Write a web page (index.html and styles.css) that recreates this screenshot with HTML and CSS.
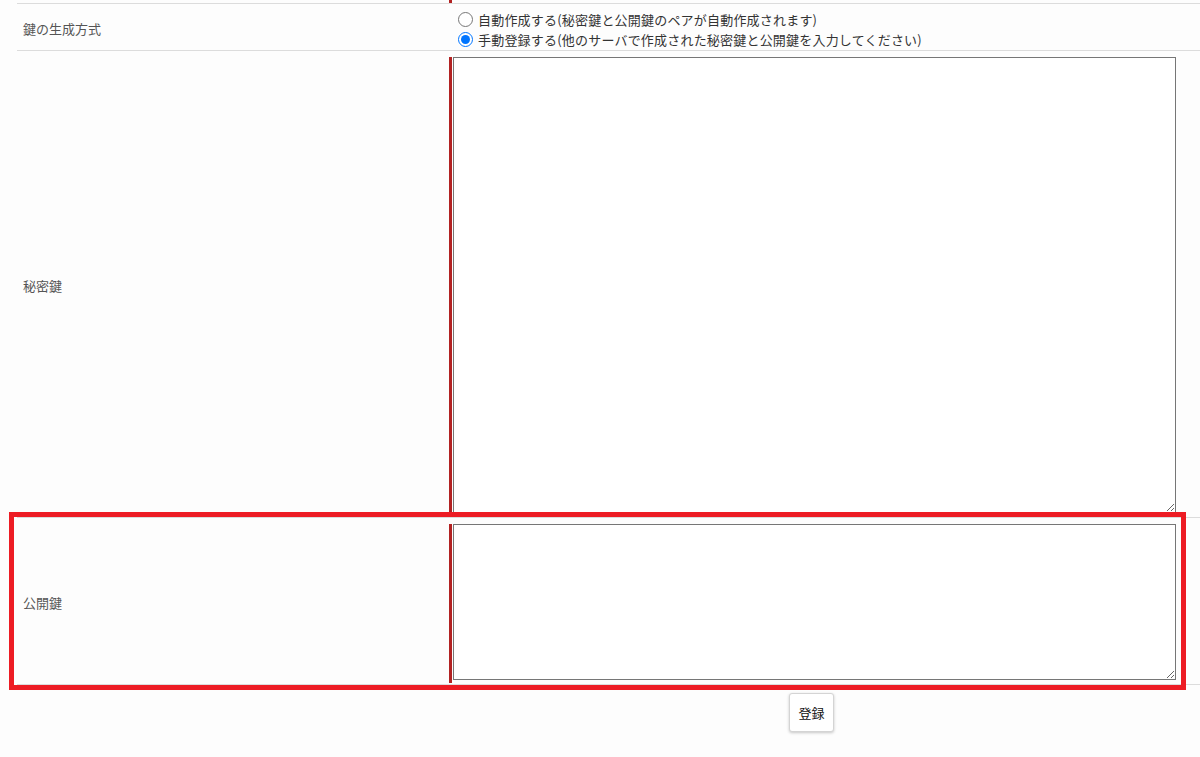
FILE: index.html
```html
<!DOCTYPE html>
<html lang="ja">
<head>
<meta charset="utf-8">
<title>鍵の登録</title>
<link rel="stylesheet" href="styles.css">
</head>
<body>
<div class="page">
  <div class="form">
    <div class="row row-cut">
      <div class="label"></div>
      <div class="value value-field"><div class="req req-cut"></div></div>
    </div>
    <div class="row row-radio">
      <div class="label label-radio"><span>鍵の生成方式</span></div>
      <div class="value value-radio">
        <label class="opt"><input type="radio" name="gen"><span>自動作成する(秘密鍵と公開鍵のペアが自動作成されます)</span></label>
        <label class="opt"><input type="radio" name="gen" checked><span>手動登録する(他のサーバで作成された秘密鍵と公開鍵を入力してください)</span></label>
      </div>
    </div>
    <div class="row">
      <div class="label label-tall"><span>秘密鍵</span></div>
      <div class="value value-field"><div class="req"><textarea class="ta ta-private"></textarea></div></div>
    </div>
    <div class="row">
      <div class="label label-tall"><span>公開鍵</span></div>
      <div class="value value-field"><div class="req"><textarea class="ta ta-public"></textarea></div></div>
    </div>
    <div class="actions">
      <button class="btn" type="button">登録</button>
    </div>
  </div>
  <div class="highlight"></div>
</div>
</body>
</html>
```
FILE: styles.css
```css
html, body {
  margin: 0;
  padding: 0;
  background: #fdfdfd;
}
body {
  font-family: "Noto Sans CJK JP", "Noto Sans", "Liberation Sans", sans-serif;
  font-size: 13px;
  color: #333;
}
.page {
  position: relative;
  height: 757px;
  overflow: hidden;
  padding-left: 17px;
}
.form {
  width: 1183px;
}
.row {
  display: grid;
  grid-template-columns: 432px 1fr;
  border-bottom: 1px solid #dcdcdc;
}
.label {
  display: flex;
  align-items: center;
  padding-left: 6px;
  color: #555;
  line-height: 20px;
}
.label-radio {
  padding-top: 3px;
}
.label-tall {
  padding-top: 4px;
}
.row-cut {
  height: 3px;
}
.req {
  border-left: 3px solid #b22222;
  padding: 0 0 3px 1px;
  width: 723px;
}
.req-cut {
  height: 3px;
  padding: 0;
}
.value-field {
  padding: 6px 0 1px 0;
}
.row-cut .value-field {
  padding: 0;
}
.value-radio {
  padding: 5px 0 1px 4px;
  display: flex;
  flex-direction: column;
}
.opt {
  display: flex;
  align-items: center;
  height: 20px;
  color: #333;
  white-space: nowrap;
  letter-spacing: 0.2px;
}
.opt input {
  width: 15px;
  height: 15px;
  margin: 0 5px 0 5px;
}
.ta {
  display: block;
  box-sizing: border-box;
  width: 723px;
  border: 1px solid #767676;
  background: #fff;
  margin: 0;
  padding: 2px;
  font-family: inherit;
}
.ta-private {
  height: 456px;
}
.ta-public {
  height: 156px;
}
.actions {
  padding: 8px 0 0 772px;
}
.btn {
  width: 45px;
  height: 39px;
  background: #fff;
  border: 1px solid #d4d4d4;
  border-radius: 3px;
  box-shadow: 0 1px 3px rgba(0, 0, 0, 0.22);
  font-family: inherit;
  font-size: 13px;
  color: #111;
  padding: 0;
}
.highlight {
  position: absolute;
  left: 9px;
  top: 512px;
  width: 1177px;
  height: 178px;
  box-sizing: border-box;
  border: 5px solid #ed1c24;
  pointer-events: none;
}
```
